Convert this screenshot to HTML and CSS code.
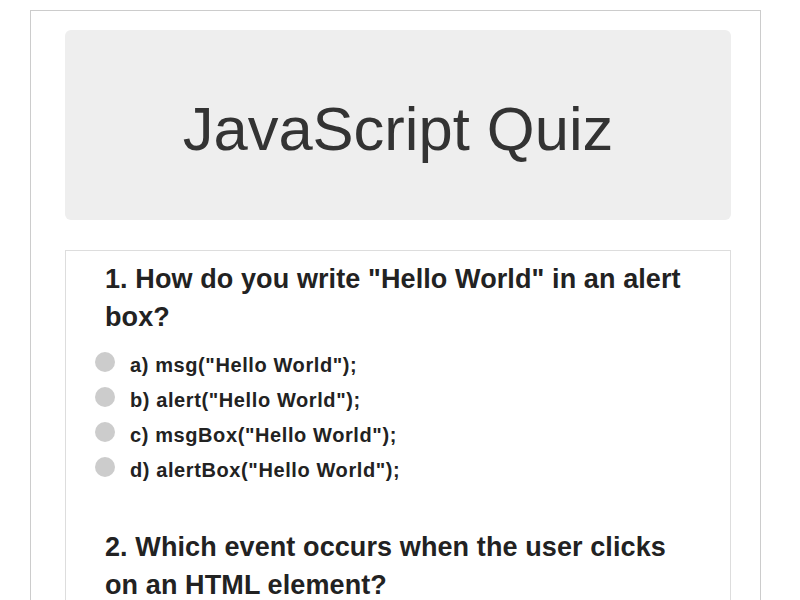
FILE: index.html
```html
<!DOCTYPE html>
<html>
<head>
<meta charset="utf-8">
<title>JavaScript Quiz</title>
<link rel="stylesheet" href="styles.css">
</head>
<body>
<div class="container">
  <div class="jumbotron">
    <h1 class="title">JavaScript Quiz</h1>
  </div>
  <div class="quiz">
    <div class="question">
      <h3 class="q-text">1. How do you write "Hello World" in an alert box?</h3>
      <ul class="options">
        <li class="option"><span class="radio"></span>a) msg("Hello World");</li>
        <li class="option"><span class="radio"></span>b) alert("Hello World");</li>
        <li class="option"><span class="radio"></span>c) msgBox("Hello World");</li>
        <li class="option"><span class="radio"></span>d) alertBox("Hello World");</li>
      </ul>
    </div>
    <div class="question">
      <h3 class="q-text">2. Which event occurs when the user clicks on an HTML element?</h3>
      <ul class="options">
        <li class="option"><span class="radio"></span>a) onmouseclick</li>
        <li class="option"><span class="radio"></span>b) onchange</li>
        <li class="option"><span class="radio"></span>c) onclick</li>
        <li class="option"><span class="radio"></span>d) onmouseover</li>
      </ul>
    </div>
  </div>
</div>
</body>
</html>
```

FILE: styles.css
```css
html, body {
  margin: 0;
  padding: 0;
  background: #fff;
}
body {
  font-family: "Liberation Sans", Arial, sans-serif;
  color: #333;
}
.container {
  margin: 10px 0 0 30px;
  width: 666px;
  padding: 19px 29px 40px 34px;
  border: 1px solid #ccc;
  border-bottom: none;
}
.jumbotron {
  background: #eee;
  border-radius: 6px;
  height: 190px;
  display: flex;
  align-items: center;
  justify-content: center;
  margin-bottom: 30px;
}
.title {
  margin: 0;
  padding-top: 8px;
  font-size: 61.5px;
  font-weight: normal;
  color: #333;
  line-height: 1;
}
.quiz {
  border: 1px solid #ddd;
  border-bottom: none;
  padding: 9px 30px 0 29px;
}
.question {
  margin-bottom: 40px;
}
.q-text {
  margin: 0 0 12px 10px;
  font-size: 27px;
  letter-spacing: 0.1px;
  font-weight: bold;
  line-height: 38px;
  color: #222;
}
.options {
  list-style: none;
  margin: 0;
  padding: 0;
}
.option {
  display: flex;
  align-items: center;
  height: 35px;
  font-size: 20px;
  letter-spacing: 0.6px;
  font-weight: bold;
  color: #222;
}
.radio {
  width: 20px;
  height: 20px;
  border-radius: 50%;
  background: #ccc;
  margin-right: 15px;
  flex: none;
  position: relative;
  top: -4px;
}
```
